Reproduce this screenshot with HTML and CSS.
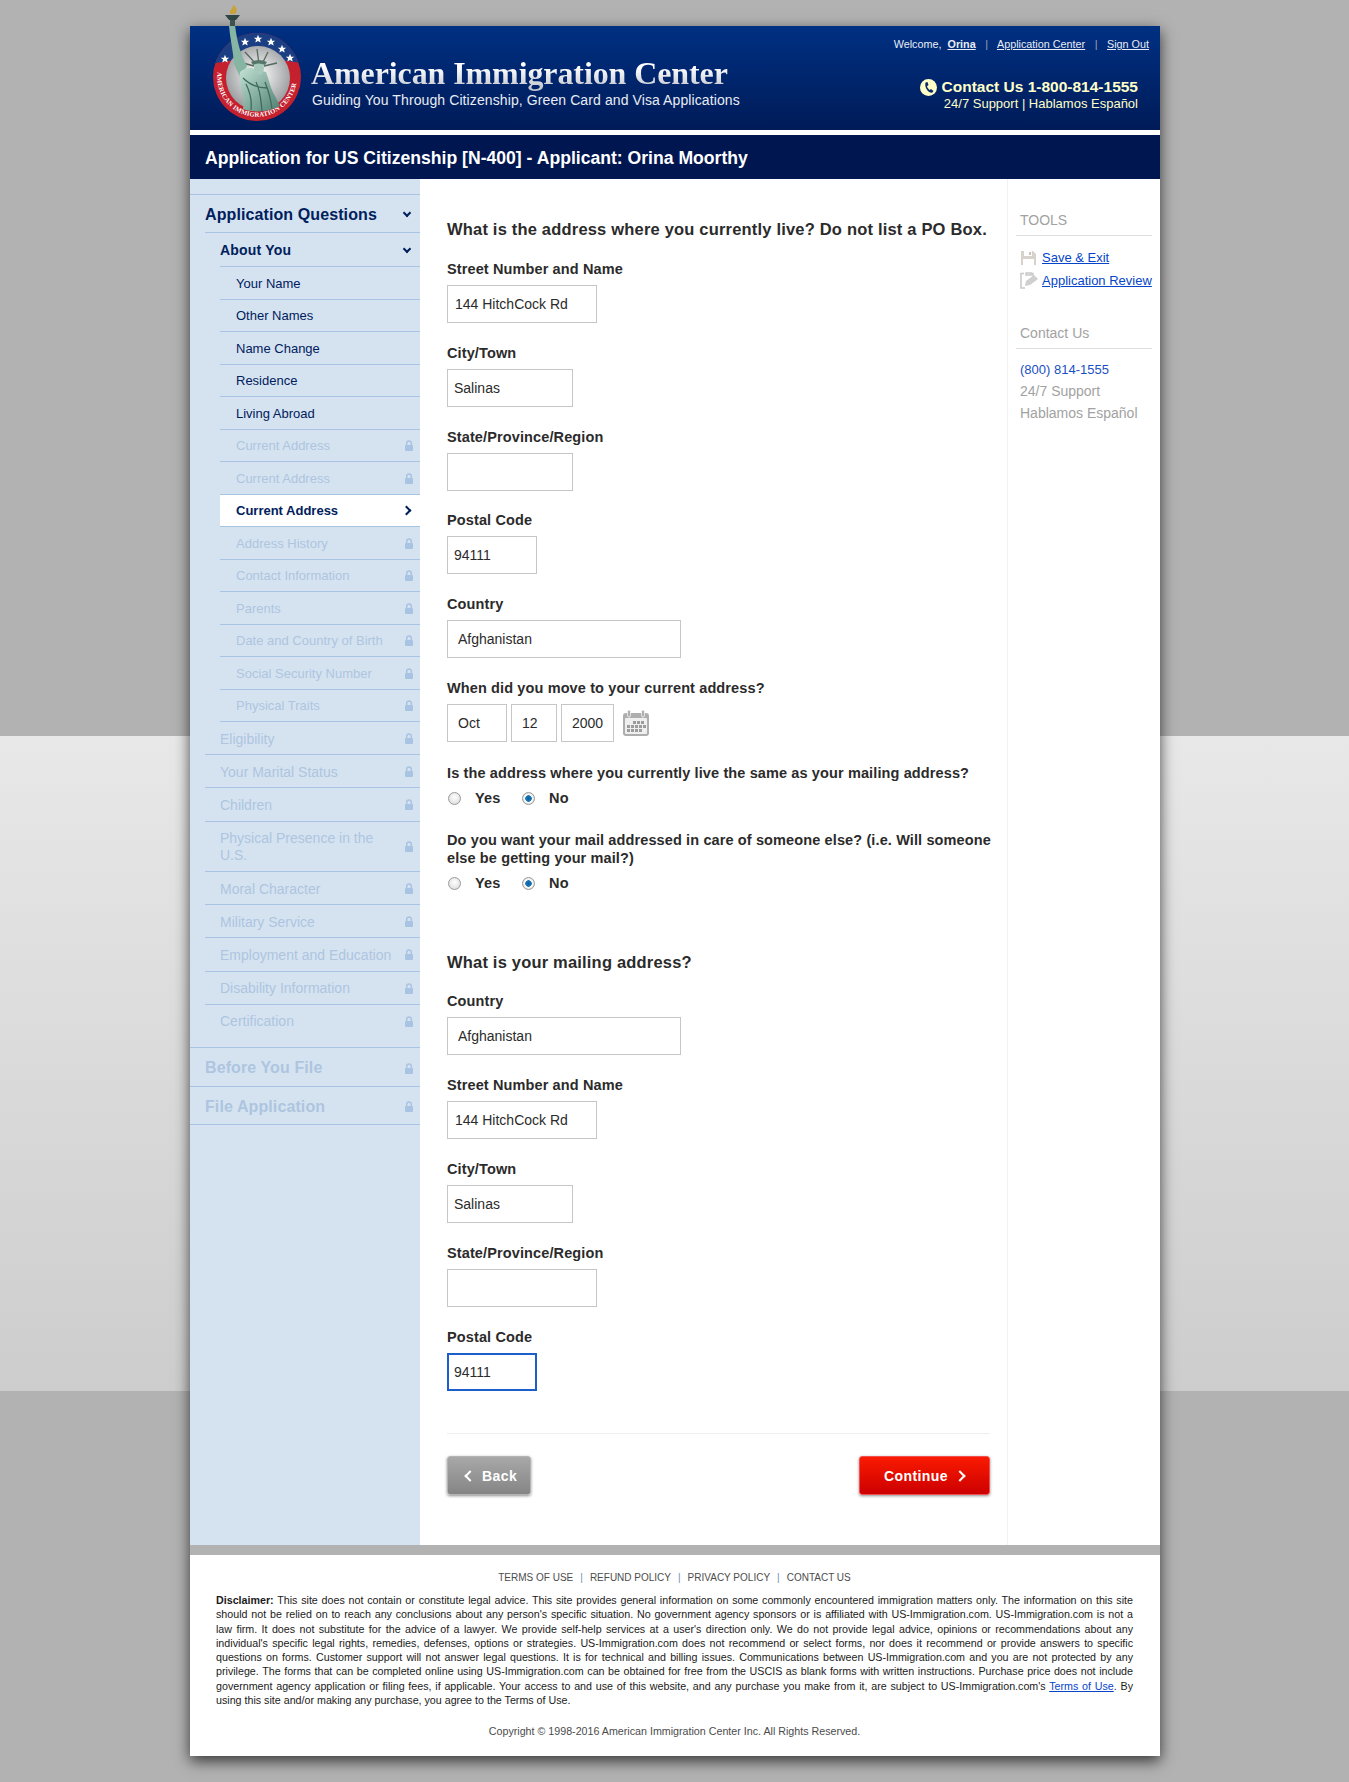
FILE: index.html
```html
<!DOCTYPE html>
<html lang="en">
<head>
    <meta charset="UTF-8">
    <title>American Immigration Center</title>
    <link rel="stylesheet" href="styles.css">
</head>
<body>
    <svg class="defs" width="0" height="0">
        <symbol id="lock" viewBox="0 0 8 11">
            <rect x="0" y="5" width="8" height="6" rx="1" fill="#a9c3e2"/>
            <path d="M1.700 5.500 V3.300 A2.300 2.300 0 0 1 6.300 3.300 V5.500" fill="none" stroke="#a9c3e2" stroke-width="1.500"/>
        </symbol>
    </svg>
    <div class="page">
        <header class="header">
            <svg class="logo" width="112" height="124" viewBox="0 0 112 124">
                <defs>
                    <radialGradient id="inner" cx="50%" cy="45%" r="60%">
                        <stop offset="0" stop-color="#fff"/>
                        <stop offset="1" stop-color="#8f9294"/>
                    </radialGradient>
                    <linearGradient id="robe" x1="0" y1="0" x2="1" y2="1">
                        <stop offset="0" stop-color="#c4e2d6"/>
                        <stop offset="1" stop-color="#4d7f70"/>
                    </linearGradient>
                    <clipPath id="top_half"><path d="M0 0 H112 V62 Q54 48 0 62 Z"/></clipPath>
                    <path id="ring_text" d="M 15 65 A 39.800 39.800 0 1 0 93 65"/>
                    <polygon id="star" points="0,-4.200 1.200,-1.300 4.200,-1.300 1.900,.6 2.700,3.600 0,1.900 -2.700,3.600 -1.900,.6 -4.200,-1.300 -1.200,-1.300"/>
                </defs>
                <circle cx="54" cy="73" r="44" fill="#c5202e"/>
                <circle cx="54" cy="73" r="44" fill="#1c3f84" clip-path="url(#top_half)"/>
                <g fill="#fff">
                    <use href="#star" x="22" y="55"/>
                    <use href="#star" x="42" y="38"/>
                    <use href="#star" x="55" y="35"/>
                    <use href="#star" x="68" y="38"/>
                    <use href="#star" x="79" y="45"/>
                    <use href="#star" x="87" y="54"/>
                </g>
                <circle cx="55" cy="74" r="32" fill="url(#inner)"/>
                <text class="ring-label"><textPath href="#ring_text" startOffset="3">AMERICAN IMMIGRATION CENTER</textPath></text>
                <path d="M56 60 L54 45 M53 60 L42 48 M51 62 L40 59 M59 60 L65 48 M61 62 L74 59" stroke="#55695f" stroke-width="1.300" fill="none"/>
                <path d="M26 22 L32 21 C34 38 38 52 44 62 L37 73 L31 60 C30 46 27 34 26 22 Z" fill="#86b5a3"/>
                <path d="M37 68 C44 62 50 64 54 66 L63 68 C66 76 68 86 72 92 L77 102 C66 108 52 109 40 105 C42 92 35 80 37 68 Z" fill="url(#robe)"/>
                <path d="M43 80 C48 90 49 98 48 106 M53 78 C58 88 58 98 59 107 M62 78 C66 88 68 96 69 105 M40 74 C46 80 54 84 64 84" stroke="#3e6b5d" stroke-width="1.300" fill="none"/>
                <ellipse cx="56" cy="64" rx="5" ry="7" fill="#a5cabc"/>
                <path d="M48 58 Q56 54 64 58 L62 61 Q56 58 50 61 Z" fill="#56766a"/>
                <rect x="27" y="14" width="5" height="8" fill="#3d5350"/>
                <path d="M22 11 H37 L33 16 H26 Z" fill="#2f4643"/>
                <path d="M27 10 C26 5 30 6 30 1 C34 3 35 6 32 10 Z" fill="#c9a23a"/>
            </svg>
            <div class="brand">
                <div class="brand_name">American Immigration Center</div>
                <div class="brand_tag">Guiding You Through Citizenship, Green Card and Visa Applications</div>
            </div>
            <div class="account">
                <div class="account_links">
                    <span>Welcome,</span>
                    <a href="#" class="user">Orina</a>
                    <span class="pipe">|</span>
                    <a href="#">Application Center</a>
                    <span class="pipe">|</span>
                    <a href="#">Sign Out</a>
                </div>
                <div class="phone">
                    <svg width="17" height="17" viewBox="0 0 17 17">
                        <circle cx="8.500" cy="8.500" r="8.500" fill="#ffffc8"/>
                        <path d="M5.500 3.500 L7.500 3 L8.500 6 L7 7.200 C7.500 8.800 8.400 10 9.700 11 L11 10 L13.500 12 L12.200 13.700 C9 14.300 4 9 5.500 3.500 Z" fill="#0c2a66"/>
                    </svg>
                    <span>Contact Us 1-800-814-1555</span>
                </div>
                <div class="support">24/7 Support | Hablamos Español</div>
            </div>
        </header>
        <div class="title_bar">Application for US Citizenship [N-400] - Applicant: Orina Moorthy</div>

        <div class="content">
            <nav class="sidebar">
                <div class="nav_top open">Application Questions <span class="chev down"></span></div>
                <div class="nav_group open">About You <span class="chev down"></span></div>
                <div class="nav_sub">
                    <a class="sub_item">Your Name</a>
                    <a class="sub_item">Other Names</a>
                    <a class="sub_item">Name Change</a>
                    <a class="sub_item">Residence</a>
                    <a class="sub_item">Living Abroad</a>
                    <a class="sub_item locked">Current Address<svg class="lock"><use href="#lock"/></svg></a>
                    <a class="sub_item locked">Current Address<svg class="lock"><use href="#lock"/></svg></a>
                    <a class="sub_item current">Current Address <span class="chev right"></span></a>
                    <a class="sub_item locked">Address History<svg class="lock"><use href="#lock"/></svg></a>
                    <a class="sub_item locked">Contact Information<svg class="lock"><use href="#lock"/></svg></a>
                    <a class="sub_item locked">Parents<svg class="lock"><use href="#lock"/></svg></a>
                    <a class="sub_item locked">Date and Country of Birth<svg class="lock"><use href="#lock"/></svg></a>
                    <a class="sub_item locked">Social Security Number<svg class="lock"><use href="#lock"/></svg></a>
                    <a class="sub_item locked">Physical Traits<svg class="lock"><use href="#lock"/></svg></a>
                </div>
                <a class="nav_item locked">Eligibility<svg class="lock"><use href="#lock"/></svg></a>
                <a class="nav_item locked">Your Marital Status<svg class="lock"><use href="#lock"/></svg></a>
                <a class="nav_item locked">Children<svg class="lock"><use href="#lock"/></svg></a>
                <a class="nav_item locked tall"><span>Physical Presence in the U.S.</span><svg class="lock"><use href="#lock"/></svg></a>
                <a class="nav_item locked">Moral Character<svg class="lock"><use href="#lock"/></svg></a>
                <a class="nav_item locked">Military Service<svg class="lock"><use href="#lock"/></svg></a>
                <a class="nav_item locked">Employment and Education<svg class="lock"><use href="#lock"/></svg></a>
                <a class="nav_item locked">Disability Information<svg class="lock"><use href="#lock"/></svg></a>
                <a class="nav_item locked last">Certification<svg class="lock"><use href="#lock"/></svg></a>
                <a class="nav_top locked">Before You File<svg class="lock"><use href="#lock"/></svg></a>
                <a class="nav_top locked">File Application<svg class="lock"><use href="#lock"/></svg></a>
            </nav>

            <main class="main">
                <h2 class="heading">What is the address where you currently live? Do not list a PO Box.</h2>
                <div class="field">
                    <label>Street Number and Name</label>
                    <div class="input w150 tight">144 HitchCock Rd</div>
                </div>
                <div class="field">
                    <label>City/Town</label>
                    <div class="input w126">Salinas</div>
                </div>
                <div class="field short">
                    <label>State/Province/Region</label>
                    <div class="input w126"></div>
                </div>
                <div class="field">
                    <label>Postal Code</label>
                    <div class="input w90">94111</div>
                </div>
                <div class="field">
                    <label>Country</label>
                    <div class="input w234 wide_pad">Afghanistan</div>
                </div>
                <div class="field date_field">
                    <label>When did you move to your current address?</label>
                    <div class="date_row">
                        <div class="input w60 wide_pad">Oct</div>
                        <div class="input w46 wide_pad">12</div>
                        <div class="input w53 wide_pad">2000</div>
                        <svg class="calendar" width="26" height="26" viewBox="0 0 26 26">
                            <path d="M3 3 H23 Q26 3 26 6 V23 Q26 26 23 26 H3 Q0 26 0 23 V6 Q0 3 3 3 Z" fill="#aeaeae"/>
                            <rect x="2" y="8" width="22" height="16" rx="1" fill="#efefef"/>
                            <rect x="4.500" y="0" width="3" height="7" rx="1.500" fill="#aeaeae" stroke="#fff" stroke-width=".7"/>
                            <rect x="18.500" y="0" width="3" height="7" rx="1.500" fill="#aeaeae" stroke="#fff" stroke-width=".7"/>
                            <g fill="#9c9c9c">
                                <rect x="10" y="11" width="3" height="3"/><rect x="14" y="11" width="3" height="3"/><rect x="18" y="11" width="3" height="3"/>
                                <rect x="4" y="15" width="3" height="3"/><rect x="8" y="15" width="3" height="3"/><rect x="12" y="15" width="3" height="3"/><rect x="16" y="15" width="3" height="3"/><rect x="20" y="15" width="3" height="3"/>
                                <rect x="4" y="19" width="3" height="3"/><rect x="8" y="19" width="3" height="3"/><rect x="12" y="19" width="3" height="3"/><rect x="16" y="19" width="3" height="3"/>
                            </g>
                        </svg>
                    </div>
                </div>
                <div class="question">
                    <label>Is the address where you currently live the same as your mailing address?</label>
                    <div class="radios">
                        <span class="radio"></span><span class="radio_label">Yes</span>
                        <span class="radio on"></span><span class="radio_label">No</span>
                    </div>
                </div>
                <div class="question">
                    <label>Do you want your mail addressed in care of someone else? (i.e. Will someone else be getting your mail?)</label>
                    <div class="radios">
                        <span class="radio"></span><span class="radio_label">Yes</span>
                        <span class="radio on"></span><span class="radio_label">No</span>
                    </div>
                </div>

                <h2 class="heading mailing">What is your mailing address?</h2>
                <div class="field">
                    <label>Country</label>
                    <div class="input w234 wide_pad">Afghanistan</div>
                </div>
                <div class="field">
                    <label>Street Number and Name</label>
                    <div class="input w150 tight">144 HitchCock Rd</div>
                </div>
                <div class="field">
                    <label>City/Town</label>
                    <div class="input w126">Salinas</div>
                </div>
                <div class="field">
                    <label>State/Province/Region</label>
                    <div class="input w150"></div>
                </div>
                <div class="field">
                    <label>Postal Code</label>
                    <div class="input w90 focused">94111</div>
                </div>

                <div class="actions">
                    <a class="btn back"><span class="chev left"></span>Back</a>
                    <a class="btn next">Continue<span class="chev right"></span></a>
                </div>
            </main>

            <aside class="tools">
                <h3>TOOLS</h3>
                <div class="tool_link">
                    <svg width="15" height="14" viewBox="0 0 15 14">
                        <path d="M0 0 H12 L15 3 V14 H0 Z" fill="#d8d2cc"/>
                        <rect x="3" y="0" width="8" height="5" fill="#fff"/>
                        <rect x="2" y="8" width="11" height="6" fill="#fff"/>
                        <rect x="8" y="1" width="2" height="3" fill="#c8c2bc"/>
                    </svg>
                    <a href="#">Save &amp; Exit</a>
                </div>
                <div class="tool_link">
                    <svg width="18" height="17" viewBox="0 0 18 17" class="review_icon">
                        <path d="M4 1.500 H1 V16 H5 M6 1 H11 V3 H6 Z M11 1.500 H13 V4" fill="none" stroke="#c8c8c8" stroke-width="1.500"/>
                        <path d="M5 14 L6 9 L14 3 L18 7 L10 13 Z" fill="#cfcfcf"/>
                    </svg>
                    <a href="#">Application Review</a>
                </div>
                <h3 class="contact_head">Contact Us</h3>
                <div class="contact_lines">
                    <div class="tel">(800) 814-1555</div>
                    <div>24/7 Support</div>
                    <div>Hablamos Español</div>
                </div>
            </aside>
        </div>

        <footer class="footer">
            <div class="footer_links">
                <a>TERMS OF USE</a><i>|</i><a>REFUND POLICY</a><i>|</i><a>PRIVACY POLICY</a><i>|</i><a>CONTACT US</a>
            </div>
            <div class="disclaimer">
                <p><b>Disclaimer:</b> This site does not contain or constitute legal advice. This site provides general information on some commonly encountered immigration matters only. The information on this site</p>
                <p>should not be relied on to reach any conclusions about any person's specific situation. No government agency sponsors or is affiliated with US-Immigration.com. US-Immigration.com is not a</p>
                <p>law firm. It does not substitute for the advice of a lawyer. We provide self-help services at a user's direction only. We do not provide legal advice, opinions or recommendations about any</p>
                <p>individual's specific legal rights, remedies, defenses, options or strategies. US-Immigration.com does not recommend or select forms, nor does it recommend or provide answers to specific</p>
                <p>questions on forms. Customer support will not answer legal questions. It is for technical and billing issues. Communications between US-Immigration.com and you are not protected by any</p>
                <p>privilege. The forms that can be completed online using US-Immigration.com can be obtained for free from the USCIS as blank forms with written instructions. Purchase price does not include</p>
                <p>government agency application or filing fees, if applicable. Your access to and use of this website, and any purchase you make from it, are subject to US-Immigration.com's <a href="#">Terms of Use</a>. By</p>
                <p class="end">using this site and/or making any purchase, you agree to the Terms of Use.</p>
            </div>
            <div class="copyright">Copyright © 1998-2016 American Immigration Center Inc. All Rights Reserved.</div>
        </footer>
    </div>
</body>
</html>
```
FILE: styles.css
```css
* {
    box-sizing: border-box;
}

html, body {
    margin: 0;
    height: 1782px;
    overflow: hidden;
}

body {
    font-family: "Liberation Sans", Arial, sans-serif;
    color: #2b2b2b;
    background: linear-gradient(to bottom, #b2b2b2 0, #b2b2b2 736px, #e8e8e8 736px, #cdcdcd 1391px, #b2b2b2 1391px);
}

.defs {
    position: absolute;
}

.page {
    position: relative;
    width: 970px;
    margin: 26px 0 0 190px;
    background: #fff;
    box-shadow: 0 5px 14px rgba(0, 0, 0, .7);
}

/* header */
.header {
    display: flex;
    height: 104px;
    background: linear-gradient(to bottom, #003082, #001b58);
}

.logo {
    position: absolute;
    top: -22px;
    left: 13px;
}

.brand {
    margin-left: 121px;
    padding-top: 29px;
}

.brand_name {
    font-family: "Liberation Serif", "Times New Roman", serif;
    font-size: 32px;
    font-weight: bold;
    line-height: 36px;
    letter-spacing: -.1px;
    white-space: nowrap;
    background: linear-gradient(to bottom, #fff 35%, #c4c8d0 90%);
    -webkit-background-clip: text;
    background-clip: text;
    color: transparent;
}

.brand_tag {
    margin-left: 1px;
    font-size: 14px;
    line-height: 18px;
    letter-spacing: .1px;
    color: #e8ecf4;
    white-space: nowrap;
}

.account {
    margin-left: auto;
    padding: 12px 11px 0 0;
    text-align: right;
    white-space: nowrap;
}

.account_links {
    font-size: 10.800px;
    line-height: 13px;
    color: #e8ecf4;
}

.account_links a {
    color: #e8ecf4;
    text-decoration: underline;
}

.account_links .user {
    margin-left: 3px;
    font-weight: bold;
}

.pipe {
    margin: 0 6.500px;
    color: #a3a3b8;
}

.phone {
    display: flex;
    justify-content: flex-end;
    align-items: center;
    gap: 5px;
    margin: 27px 11px 0 0;
    font-size: 15.500px;
    line-height: 18px;
    font-weight: bold;
    color: #ffffc8;
}

.support {
    margin-right: 11px;
    font-size: 13px;
    line-height: 16px;
    color: #ffffc8;
}

.title_bar {
    height: 49px;
    padding: 8px 0 0 15px;
    border-top: 5px solid #fff;
    background: #001650;
    color: #fff;
    font-size: 17.600px;
    font-weight: bold;
    line-height: 31px;
}

/* three columns */
.content {
    display: flex;
    height: 1366px;
}

.sidebar {
    width: 230px;
    flex: none;
    padding-top: 15px;
    background: #d5e3f1;
    color: #00205c;
}

.nav_top,
.nav_group,
.sub_item,
.nav_item {
    display: flex;
    align-items: center;
    position: relative;
    border-bottom: 1px solid #a9c3e2;
    padding-top: 1px;
    padding-right: 7px;
}

.lock {
    flex: none;
    width: 8px;
    height: 11px;
    margin-left: auto;
}

.nav_top {
    padding-top: 2px;
    font-size: 16px;
    font-weight: bold;
    letter-spacing: .1px;
}

.nav_top.open {
    border-top: 1px solid #a9c3e2;
    border-bottom: 0;
    height: 39px;
    padding-left: 15px;
}

.nav_top.open::after {
    content: "";
    position: absolute;
    left: 15px;
    right: 0;
    bottom: 0;
    border-bottom: 1px solid #a9c3e2;
}

.sidebar > .nav_top.locked {
    padding-left: 15px;
    height: 38px;
    color: #aec5df;
}

.sidebar > .nav_top.locked:last-child {
    padding-top: 3px;
}

.sidebar > .nav_item.last + .nav_top {
    height: 39.500px;
    border-top: 1px solid #a9c3e2;
}

.nav_group {
    height: 34px;
    margin-left: 30px;
    font-size: 14px;
    font-weight: bold;
    letter-spacing: .2px;
}

.nav_sub {
    margin-left: 30px;
}

.sub_item {
    height: 32.500px;
    padding-left: 16px;
    font-size: 13px;
}

.nav_item {
    height: 33.200px;
    margin-left: 15px;
    padding-left: 15px;
    font-size: 14px;
}

.nav_item.tall {
    height: 50.400px;
    line-height: 17px;
}

.nav_item.tall span {
    width: 165px;
}

.nav_item.last {
    height: 42.600px;
    padding-top: 0;
    padding-bottom: 10px;
    border-bottom: 0;
}

.locked {
    color: #aec5df;
}

.sub_item.current {
    background: #fff;
    font-weight: bold;
    color: #00205c;
}

.chev {
    display: inline-block;
    width: 6px;
    height: 6px;
    border-right: 2px solid #00205c;
    border-bottom: 2px solid #00205c;
}

.chev.down {
    position: absolute;
    right: 10px;
    top: 50%;
    margin-top: -4px;
    transform: rotate(45deg);
}

.chev.right {
    transform: rotate(-45deg);
}

.sub_item .chev.right {
    position: absolute;
    right: 10px;
    top: 50%;
    margin-top: -3px;
    width: 7px;
    height: 7px;
}

/* form column */
.main {
    width: 587px;
    flex: none;
    padding: 40px 0 0 27px;
}

.heading {
    margin: 0 0 21px;
    width: 543px;
    font-size: 16.500px;
    line-height: 20px;
    font-weight: bold;
    letter-spacing: .19px;
    white-space: nowrap;
}

.heading.mailing {
    margin: 60px 0 20px;
}

.field {
    margin-bottom: 21px;
}

.field.short {
    margin-bottom: 20px;
}

.field.date_field {
    margin-bottom: 22px;
}

.field label,
.question label {
    display: block;
    font-size: 14.500px;
    font-weight: bold;
    line-height: 18px;
    letter-spacing: .12px;
    margin-bottom: 7px;
}

.input {
    display: flex;
    align-items: center;
    height: 38px;
    padding-left: 6px;
    border: 1px solid #c6c6c6;
    font-size: 14px;
    color: #2b2b2b;
}

.tight {
    padding-left: 7px;
}

.wide_pad {
    padding-left: 10px;
}

.w150 { width: 150px; }
.w126 { width: 126px; }
.w90 { width: 90px; }
.w234 { width: 234px; }
.w60 { width: 60px; }
.w46 { width: 46px; }
.w53 { width: 53px; }

.focused {
    border: 2px solid #1c5fcc;
    padding-left: 5px;
}

.date_row {
    display: flex;
    align-items: flex-start;
    gap: 4px;
}

.calendar {
    margin: 6px 0 0 5px;
}

.question {
    width: 548px;
    margin-bottom: 24px;
}

.radios {
    display: flex;
    align-items: center;
    height: 18px;
}

.radio {
    width: 13px;
    height: 13px;
    border-radius: 50%;
    margin-left: 1px;
    border: 1px solid #9a9a9a;
    background: radial-gradient(circle at 50% 40%, #fff, #d6d6d6);
}

.radio.on {
    background: radial-gradient(circle, #0b5f9c 0, #1f78b8 3px, #fff 3.500px, #dcdcdc 6px);
}

.radio_label {
    width: 46px;
    margin-left: 14px;
    font-size: 14.500px;
    font-weight: bold;
    letter-spacing: .2px;
}

.actions {
    display: flex;
    justify-content: space-between;
    margin-top: 42px;
    padding-top: 22px;
    border-top: 1px solid #eeeeee;
    width: 543px;
}

.btn {
    display: flex;
    align-items: center;
    height: 39px;
    border-radius: 3px;
    font-size: 14px;
    font-weight: bold;
    letter-spacing: .4px;
    color: #fff;
    box-shadow: 0 1px 3px rgba(0, 0, 0, .45);
}

.btn.back {
    width: 84px;
    padding-left: 18px;
    border: 1px solid #b4b4b4;
    background: linear-gradient(to bottom, #a8a8a8, #858585);
}

.btn.next {
    width: 131px;
    padding-left: 24px;
    border: 1px solid #f05050;
    background: linear-gradient(to bottom, #fa1a00, #cc0000);
}

.btn .chev {
    width: 8px;
    height: 8px;
    border-width: 2.500px;
    border-color: #fff;
}

.btn .chev.left {
    margin-right: 8px;
    transform: rotate(135deg);
}

.btn .chev.right {
    margin-left: 8px;
}

/* right column */
.tools {
    flex: 1;
    padding: 32px 9px 0 8px;
    border-left: 1px solid #f2f2f2;
    font-size: 14px;
    color: #a2a2a2;
}

.tools h3 {
    margin: 0 0 10px;
    padding: 0 0 7px 4px;
    height: 25px;
    border-bottom: 1px solid #dedede;
    font-size: 14px;
    line-height: 18px;
    font-weight: normal;
}

.tool_link {
    display: flex;
    align-items: center;
    gap: 6px;
    height: 23px;
    padding-left: 5px;
    font-size: 13px;
    white-space: nowrap;
}

.tool_link a {
    color: #0645c8;
}

.review_icon {
    margin-left: -1px;
    margin-right: -2px;
}

.tools .contact_head {
    margin-top: 32px;
}

.contact_lines {
    padding-left: 4px;
    line-height: 21.800px;
}

.tel {
    font-size: 13px;
    color: #1a4fc4;
}

/* footer */
.footer {
    height: 211px;
    border-top: 10px solid #b2b2b2;
    padding: 15px 27px 0 26px;
}

.footer_links {
    text-align: center;
    font-size: 10px;
    line-height: 16px;
    color: #4c4c4c;
}

.footer_links i {
    margin: 0 7px;
    font-style: normal;
    color: #6d8fb8;
}

.disclaimer {
    margin-top: 7px;
    font-size: 10.700px;
    line-height: 14.300px;
    color: #1a1a1a;
}

.disclaimer p {
    margin: 0;
    text-align: justify;
    text-align-last: justify;
}

.disclaimer p.end {
    text-align-last: left;
}

.disclaimer a {
    color: #0645c8;
}

.copyright {
    margin-top: 16px;
    text-align: center;
    font-size: 10.700px;
    line-height: 16px;
    color: #4c4c4c;
}

.ring-label {
    font-family: "Liberation Serif", serif;
    font-size: 6.600px;
    font-weight: bold;
    fill: #fff;
    letter-spacing: .25px;
}
```
